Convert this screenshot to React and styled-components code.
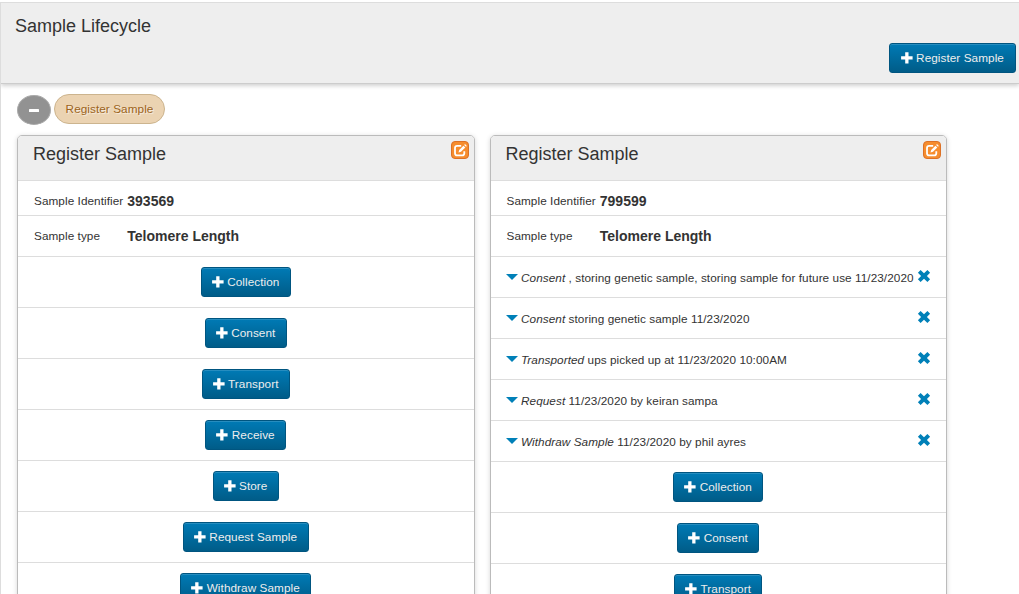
import React from 'react';
import styled, { createGlobalStyle } from 'styled-components';

const GlobalStyle = createGlobalStyle`
  * { box-sizing: border-box; }
  html, body { margin: 0; height: 100%; overflow: hidden; background: #fff; }
  body { font: 11.75px/20px "Liberation Sans", Arial, sans-serif; letter-spacing: 0.065px; color: #333; }
`;

const Page = styled.main`
  height: 592px;
  margin-top: 2px;
  overflow: hidden;
  border-left: 1px solid #ddd;
`;

const Header = styled.header`
  display: flex;
  justify-content: space-between;
  height: 82px;
  padding: 13px 3px 0 14px;
  background: #eee;
  border-top: 1px solid #ddd;
  border-bottom: 1px solid #ccc;
  box-shadow: 0 2px 4px rgba(0, 0, 0, 0.18);
`;

const Title = styled.h1`
  margin: 0;
  font-size: 18px;
  font-weight: 400;
  line-height: 20px;
  letter-spacing: 0;
`;

const HeaderActions = styled.div`
  padding-top: 27px;
`;

const ButtonBase = styled.button`
  display: flex;
  align-items: center;
  justify-content: center;
  gap: 3.5px;
  height: 30px;
  width: ${(p) => p.$width}px;
  padding: 0 0.5px 0 0;
  border: 1px solid #005580;
  border-radius: 3px;
  background: linear-gradient(#007ab5, #005c88);
  box-shadow: inset 0 1px 0 rgba(255, 255, 255, 0.15);
  color: #eee;
  font: inherit;
  letter-spacing: inherit;
  white-space: nowrap;
`;

const Filters = styled.div`
  display: flex;
  align-items: flex-start;
  height: 51px;
  padding: 10px 0 0 16px;
`;

const Collapse = styled.button`
  display: flex;
  align-items: center;
  justify-content: center;
  width: 34px;
  height: 30px;
  margin: 1px 3px 0 0;
  padding: 1px 0 0;
  border: 1px solid #aaa;
  border-radius: 50%;
  background: #929292;
`;

const Tag = styled.button`
  width: 111px;
  height: 30px;
  padding: 0;
  border: 1px solid #ccb48e;
  border-radius: 15px;
  background: #ebd3b2;
  color: #9b6320;
  font: inherit;
  letter-spacing: inherit;
  white-space: nowrap;
  text-shadow: 1px 1px 1px rgba(255, 255, 255, 0.7);
`;

const Cards = styled.div`
  display: flex;
  align-items: flex-start;
  gap: 15px;
  padding-left: 16px;
`;

const CardBox = styled.section`
  width: 457.5px;
  flex: none;
  min-height: 500px;
  border: 1px solid #bbb;
  border-radius: 5px;
  overflow: hidden;
  background: #fff;
  box-shadow: 0 1px 5px rgba(0, 0, 0, 0.16);
`;

const CardHeader = styled.div`
  display: flex;
  justify-content: space-between;
  height: 45px;
  padding: 5px 5px 0 15px;
  background: #eee;
  border-bottom: 1px solid #ddd;
`;

const CardTitle = styled.h2`
  margin: 3px 0 0;
  font-size: 18px;
  font-weight: 400;
  line-height: 20px;
  letter-spacing: 0;
`;

const Edit = styled.button`
  width: 18px;
  height: 18px;
  padding: 0;
  border: 1px solid #dc7126;
  border-radius: 4px;
  background: #f68d2e;
  display: grid;
  place-items: center;
`;

const Field = styled.div`
  display: flex;
  height: ${(p) => p.$height}px;
  padding: 10px 0 0 16px;
  border-bottom: 1px solid #ddd;
`;

const Label = styled.span`
  width: 93.3px;
  white-space: nowrap;
`;

const Value = styled.strong`
  font-size: 14px;
  letter-spacing: 0;
`;

const EventRow = styled.div`
  display: flex;
  height: 41px;
  padding: 10px 15px 0 15px;
  border-bottom: 1px solid #ddd;
  white-space: nowrap;
`;

const EventText = styled.span`
  flex: 1;
  padding-top: 1px;
`;

const Caret = styled.span`
  width: 0;
  height: 0;
  margin: 7px 3px 0 0.5px;
  border: 6px solid transparent;
  border-top: 6px solid #0080b8;
  border-bottom: 0;
`;

const Remove = styled.button`
  width: 14px;
  height: 14px;
  margin-top: 2px;
  padding: 0;
  border: 0;
  background: none;
  display: flex;
`;

const ActionRow = styled.div`
  display: flex;
  justify-content: center;
  height: 51px;
  padding-top: 10px;
  border-bottom: 1px solid #ddd;
`;

const PlusIcon = () => (
  <svg width="12" height="12" viewBox="0 0 12 12" aria-hidden="true">
    <path d="M4.2 .3h3.3v3.9h4.1v3.3H7.5v3.9H4.2V7.5H.1V4.2h4.1z" fill="#fff" />
  </svg>
);

const MinusIcon = () => (
  <svg width="10" height="3" viewBox="0 0 10 3" aria-hidden="true">
    <rect width="10" height="3" rx=".6" fill="#fff" />
  </svg>
);

const RemoveIcon = () => (
  <svg width="14" height="14" viewBox="0 0 14 14" aria-hidden="true">
    <path
      d="M3.6 1.1 7 4.3l3.4-3.2 2.7 2.7L9.9 7l3.2 3.2-2.7 2.7L7 9.7l-3.4 3.2-2.7-2.7L4.1 7 .9 3.8z"
      fill="#0080b8"
    />
  </svg>
);

const EditIcon = () => (
  <svg width="16" height="16" viewBox="0 0 16 16" fill="none" aria-hidden="true">
    <path
      d="M9.2 3.9H5.2Q3 3.9 3 6.1v5.1q0 2.2 2.2 2.2h4.9q2.2 0 2.2-2.2V9.2"
      stroke="#fff"
      strokeWidth="1.8"
    />
    <path d="m6.5 10.5.7-2.5 4.2-4.3 1.9 1.9-4.3 4.2z" fill="#fff" />
    <path d="m12.2 2.9.8-.8 1.8 1.8-.8.8z" fill="#fff" />
  </svg>
);

const AddButton = ({ label, width }) => (
  <ButtonBase $width={width}>
    <PlusIcon />
    <span>{label}</span>
  </ButtonBase>
);

const actions = [
  ['Collection', 90],
  ['Consent', 82],
  ['Transport', 88],
  ['Receive', 81],
  ['Store', 66],
  ['Request Sample', 126],
  ['Withdraw Sample', 131],
];

const samples = [
  { id: '393569', type: 'Telomere Length', events: [] },
  {
    id: '799599',
    type: 'Telomere Length',
    events: [
      ['Consent', ', storing genetic sample, storing sample for future use 11/23/2020'],
      ['Consent', 'storing genetic sample 11/23/2020'],
      ['Transported', 'ups picked up at 11/23/2020 10:00AM'],
      ['Request', '11/23/2020 by keiran sampa'],
      ['Withdraw Sample', '11/23/2020 by phil ayres'],
    ],
  },
];

const SampleCard = ({ sample }) => (
  <CardBox>
    <CardHeader>
      <CardTitle>Register Sample</CardTitle>
      <Edit aria-label="Edit"><EditIcon /></Edit>
    </CardHeader>
    <Field $height={35}>
      <Label>Sample Identifier</Label>
      <Value>{sample.id}</Value>
    </Field>
    <Field $height={41}>
      <Label>Sample type</Label>
      <Value>{sample.type}</Value>
    </Field>
    {sample.events.map(([kind, detail]) => (
      <EventRow key={kind + detail}>
        <Caret />
        <EventText><em>{kind}</em> {detail}</EventText>
        <Remove aria-label="Remove"><RemoveIcon /></Remove>
      </EventRow>
    ))}
    {actions.map(([label, width]) => (
      <ActionRow key={label}>
        <AddButton label={label} width={width} />
      </ActionRow>
    ))}
  </CardBox>
);

export default function App() {
  return (
    <>
      <GlobalStyle />
      <Page>
        <Header>
          <Title>Sample Lifecycle</Title>
          <HeaderActions><AddButton label="Register Sample" width={127} /></HeaderActions>
        </Header>
        <Filters>
          <Collapse aria-label="Collapse"><MinusIcon /></Collapse>
          <Tag>Register Sample</Tag>
        </Filters>
        <Cards>
          {samples.map((sample) => <SampleCard key={sample.id} sample={sample} />)}
        </Cards>
      </Page>
    </>
  );
}
